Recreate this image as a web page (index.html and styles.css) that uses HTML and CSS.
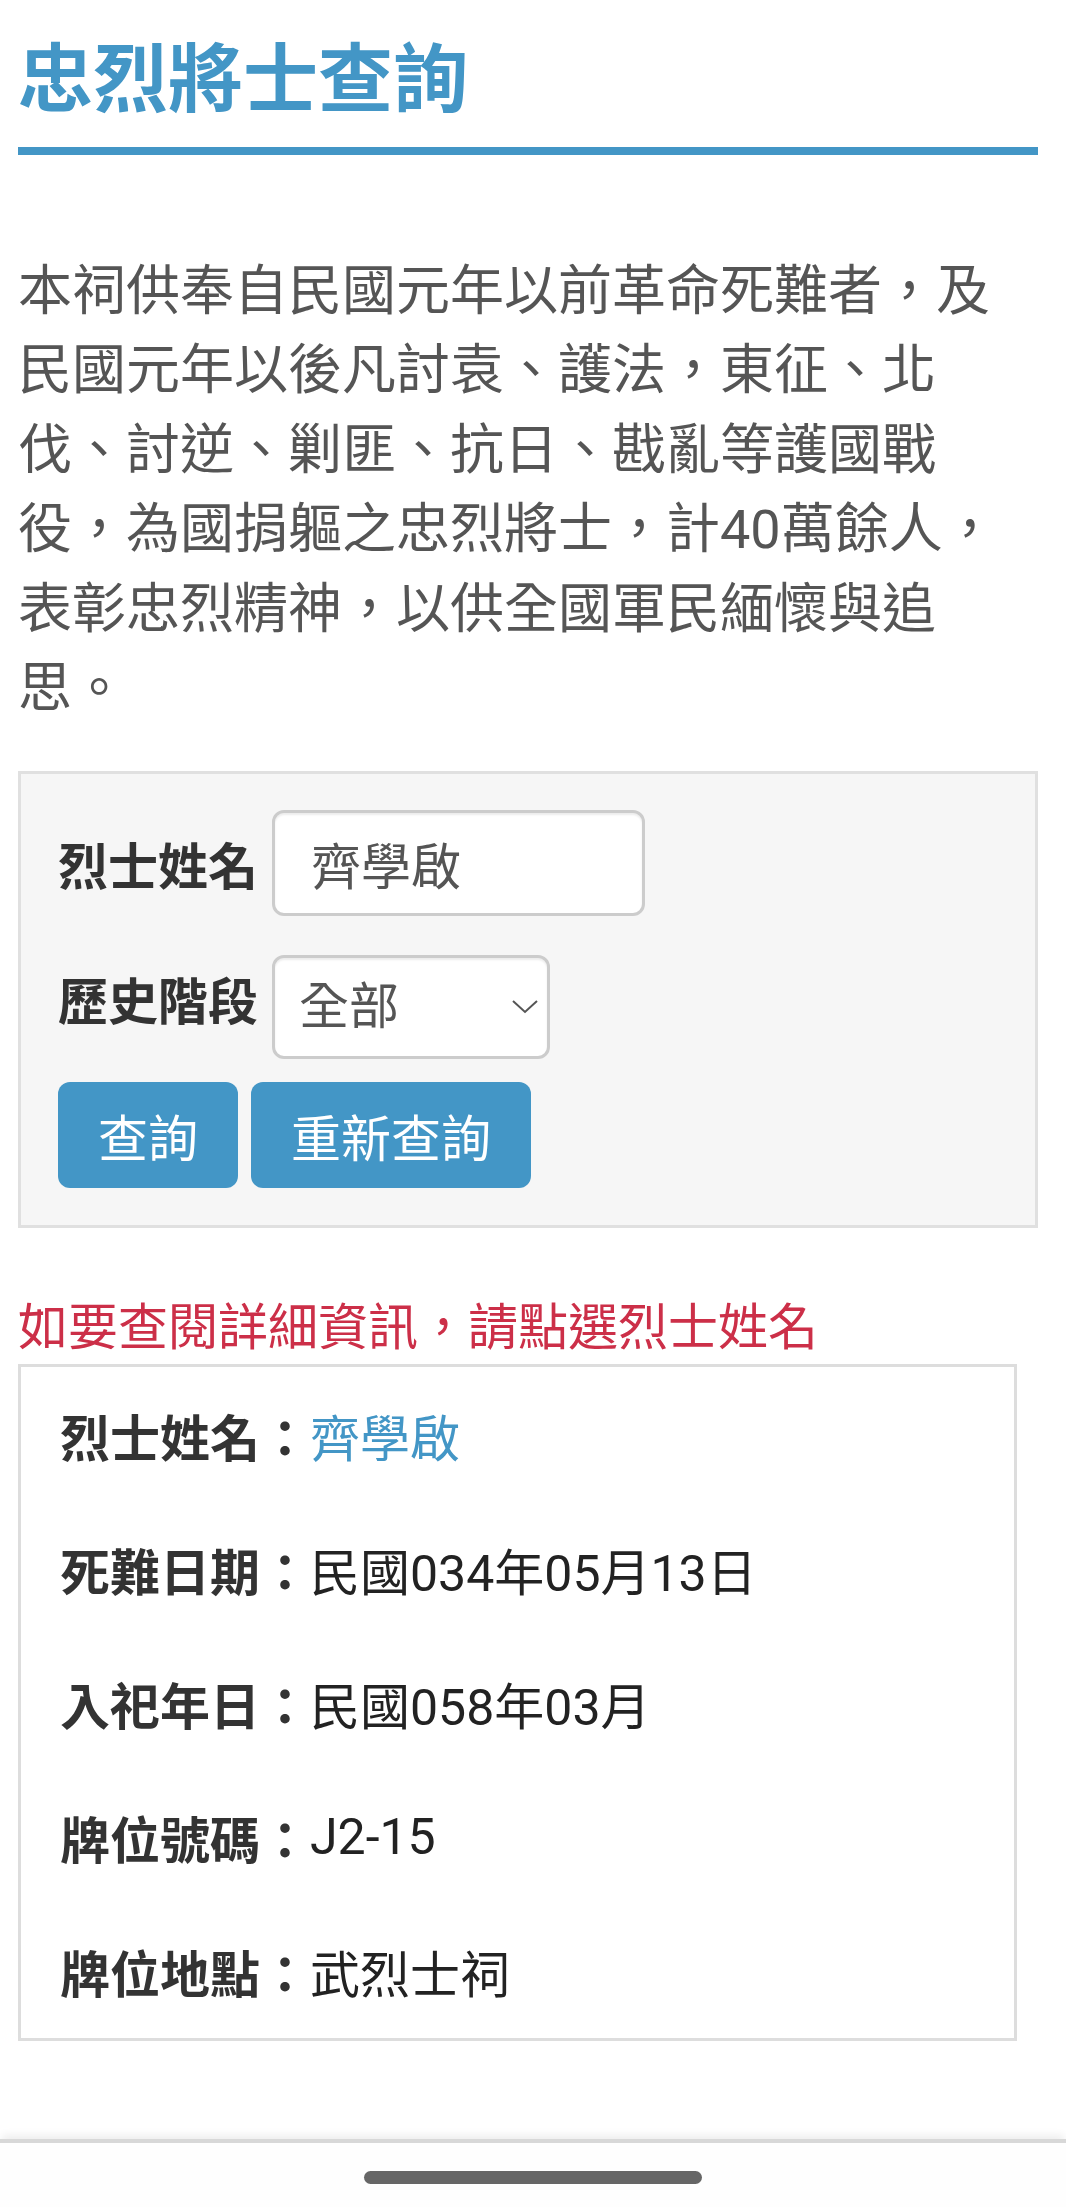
FILE: index.html
```html
<!DOCTYPE html>
<html lang="zh-Hant">

<head>
    <meta charset="UTF-8">
    <meta name="viewport" content="width=device-width, initial-scale=1.0">
    <title>忠烈將士查詢</title>
    <link rel="stylesheet" href="styles.css">
</head>

<body>
    <div class="page">
        <h1 class="title">忠烈將士查詢</h1>

        <p class="intro">本祠供奉自民國元年以前革命死難者，及民國元年以後凡討袁、護法，東征、北伐、討逆、剿匪、抗日、戡亂等護國戰役，為國捐軀之忠烈將士，計40萬餘人，表彰忠烈精神，以供全國軍民緬懷與追思。</p>

        <form class="search">
            <div class="field">
                <label for="name">烈士姓名</label>
                <input type="text" id="name" class="text-input" value="齊學啟">
            </div>
            <div class="field">
                <label for="period" class="label-raised">歷史階段</label>
                <div class="select-wrap">
                    <select id="period" class="select">
                        <option>全部</option>
                    </select>
                    <svg class="chevron" width="26" height="14" viewBox="0 0 26 14">
                        <path d="M1 1 L13 12 L25 1" fill="none" stroke="#555" stroke-width="2"/>
                    </svg>
                </div>
            </div>
            <div class="actions">
                <button type="button" class="btn">查詢</button>
                <button type="reset" class="btn">重新查詢</button>
            </div>
        </form>

        <p class="hint">如要查閱詳細資訊，請點選烈士姓名</p>

        <div class="result">
            <div class="row"><span class="key">烈士姓名：</span><a href="#" class="name-link">齊學啟</a></div>
            <div class="row"><span class="key">死難日期：</span><span>民國034年05月13日</span></div>
            <div class="row"><span class="key">入祀年日：</span><span>民國058年03月</span></div>
            <div class="row"><span class="key">牌位號碼：</span><span>J2-15</span></div>
            <div class="row"><span class="key">牌位地點：</span><span>武烈士祠</span></div>
        </div>
    </div>

    <div class="navbar">
        <div class="pill"></div>
    </div>
</body>

</html>
```

FILE: styles.css
```css
body {
    margin: 0;
    background: #fff;
    font-family: Roboto, "Noto Sans CJK TC", sans-serif;
    color: #333;
}

.page {
    width: 1020px;
    padding: 35px 0 0 18px;
}

.title {
    margin: 0;
    font-size: 75px;
    line-height: 90px;
    font-weight: bold;
    color: #4396c6;
    padding-bottom: 22px;
    border-bottom: 8px solid #4396c6;
}

.intro {
    margin: 97px 0 0;
    font-size: 54px;
    line-height: 79.4px;
    color: #555;
}

.search {
    margin-top: 43px;
    padding: 36px 37px 37px;
    background: #f6f6f6;
    border: 3px solid #e0e0e0;
}

.field {
    display: flex;
    align-items: center;
    margin-bottom: 39px;
}

.field:nth-child(2) {
    margin-bottom: 23px;
}

.field label {
    font-size: 50px;
    font-weight: bold;
    color: #333;
    margin-right: 12px;
    width: 202px;
}

.field .label-raised {
    margin-bottom: 18px;
}

.text-input {
    box-sizing: border-box;
    width: 373px;
    height: 106px;
    border: 3px solid #ccc;
    border-radius: 12px;
    padding: 0 0 0 36px;
    font-family: inherit;
    font-size: 50px;
    color: #555;
    background: #fff;
    box-shadow: inset 0 2px 2px rgba(0, 0, 0, 0.075);
}

.select-wrap {
    position: relative;
}

.select {
    box-sizing: border-box;
    width: 278px;
    height: 104px;
    border: 3px solid #ccc;
    border-radius: 12px;
    padding: 0 0 0 24px;
    font-family: inherit;
    font-size: 50px;
    color: #555;
    background: #fff;
    appearance: none;
    -webkit-appearance: none;
    box-shadow: inset 0 2px 2px rgba(0, 0, 0, 0.075);
}

.chevron {
    position: absolute;
    left: 240px;
    top: 45px;
}

.actions {
    display: flex;
    gap: 13px;
}

.btn {
    height: 106px;
    padding: 0 40px;
    border: none;
    border-radius: 12px;
    background: #4396c6;
    color: #fff;
    font-family: inherit;
    font-size: 50px;
}

.hint {
    margin: 65px 0 0;
    font-size: 50px;
    line-height: 71px;
    color: #cc2f48;
}

.result {
    width: 999px;
    box-sizing: border-box;
    padding: 1px 39px 0;
    border: 3px solid #ddd;
}

.row {
    height: 134px;
    display: flex;
    align-items: center;
    font-size: 50px;
    color: #222;
}

.key {
    font-weight: bold;
    color: #333;
}

.name-link {
    color: #4396c6;
    text-decoration: none;
}

.navbar {
    position: fixed;
    left: 0;
    right: 0;
    bottom: 0;
    height: 36px;
    padding-top: 28px;
    border-top: 4px solid #d8d8d8;
    background: #fefefe;
    box-shadow: 0 -6px 8px -2px rgba(0, 0, 0, 0.07);
    display: flex;
    justify-content: center;
    align-items: flex-start;
}

.pill {
    width: 338px;
    height: 13px;
    border-radius: 7px;
    background: #666;
}
```
